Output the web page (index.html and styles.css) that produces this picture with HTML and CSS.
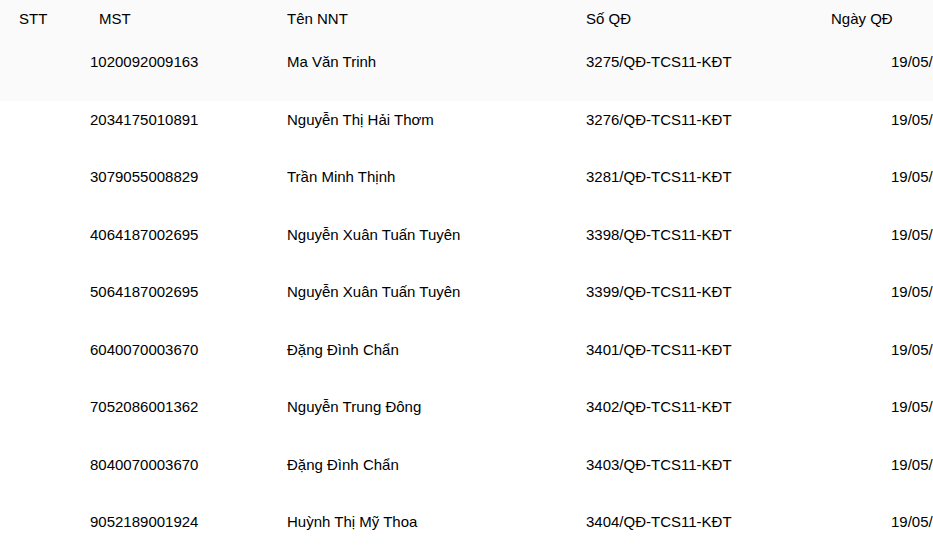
FILE: index.html
```html
<!DOCTYPE html>
<html lang="vi">
<head>
    <meta charset="UTF-8">
    <meta name="viewport" content="width=device-width, initial-scale=1.0">
    <title>Danh sách quyết định</title>
    <link rel="stylesheet" href="styles.css">
</head>
<body>
    <div class="grid-table">
        <div class="row head">
            <div class="cell c-stt">STT</div>
            <div class="cell c-mst">MST</div>
            <div class="cell c-name">Tên NNT</div>
            <div class="cell c-so">Số QĐ</div>
            <div class="cell c-date">Ngày QĐ</div>
        </div>
        <div class="row active">
            <div class="cell c-stt"></div>
            <div class="cell c-mst">1020092009163</div>
            <div class="cell c-name">Ma Văn Trinh</div>
            <div class="cell c-so">3275/QĐ-TCS11-KĐT</div>
            <div class="cell c-date">19/05/2023</div>
        </div>
        <div class="row">
            <div class="cell c-stt"></div>
            <div class="cell c-mst">2034175010891</div>
            <div class="cell c-name">Nguyễn Thị Hải Thơm</div>
            <div class="cell c-so">3276/QĐ-TCS11-KĐT</div>
            <div class="cell c-date">19/05/2023</div>
        </div>
        <div class="row">
            <div class="cell c-stt"></div>
            <div class="cell c-mst">3079055008829</div>
            <div class="cell c-name">Trần Minh Thịnh</div>
            <div class="cell c-so">3281/QĐ-TCS11-KĐT</div>
            <div class="cell c-date">19/05/2023</div>
        </div>
        <div class="row">
            <div class="cell c-stt"></div>
            <div class="cell c-mst">4064187002695</div>
            <div class="cell c-name">Nguyễn Xuân Tuấn Tuyên</div>
            <div class="cell c-so">3398/QĐ-TCS11-KĐT</div>
            <div class="cell c-date">19/05/2023</div>
        </div>
        <div class="row">
            <div class="cell c-stt"></div>
            <div class="cell c-mst">5064187002695</div>
            <div class="cell c-name">Nguyễn Xuân Tuấn Tuyên</div>
            <div class="cell c-so">3399/QĐ-TCS11-KĐT</div>
            <div class="cell c-date">19/05/2023</div>
        </div>
        <div class="row">
            <div class="cell c-stt"></div>
            <div class="cell c-mst">6040070003670</div>
            <div class="cell c-name">Đặng Đình Chẩn</div>
            <div class="cell c-so">3401/QĐ-TCS11-KĐT</div>
            <div class="cell c-date">19/05/2023</div>
        </div>
        <div class="row">
            <div class="cell c-stt"></div>
            <div class="cell c-mst">7052086001362</div>
            <div class="cell c-name">Nguyễn Trung Đông</div>
            <div class="cell c-so">3402/QĐ-TCS11-KĐT</div>
            <div class="cell c-date">19/05/2023</div>
        </div>
        <div class="row">
            <div class="cell c-stt"></div>
            <div class="cell c-mst">8040070003670</div>
            <div class="cell c-name">Đặng Đình Chẩn</div>
            <div class="cell c-so">3403/QĐ-TCS11-KĐT</div>
            <div class="cell c-date">19/05/2023</div>
        </div>
        <div class="row">
            <div class="cell c-stt"></div>
            <div class="cell c-mst">9052189001924</div>
            <div class="cell c-name">Huỳnh Thị Mỹ Thoa</div>
            <div class="cell c-so">3404/QĐ-TCS11-KĐT</div>
            <div class="cell c-date">19/05/2023</div>
        </div>
    </div>
</body>
</html>
```

FILE: styles.css
```css
html, body {
    margin: 0;
    padding: 0;
    background: #fff;
    overflow: hidden;
}
body {
    font-family: "Liberation Sans", Arial, sans-serif;
    font-size: 15px;
    line-height: 17px;
    color: #000;
}
.grid-table {
    width: 1040px;
}
.row {
    display: grid;
    grid-template-columns: 90px 197px 299px 245px 209px;
    height: 57.5px;
    box-sizing: border-box;
    padding-top: 10px;
}
.row.head {
    height: 43px;
    background: #fafafa;
}
.row.active {
    background: #fafafa;
}
.cell {
    white-space: nowrap;
}
.c-stt {
    padding-left: 19px;
}
.head .c-mst {
    padding-left: 9px;
}
.c-date {
    padding-left: 60px;
}
.head .c-date {
    padding-left: 0;
}
```
